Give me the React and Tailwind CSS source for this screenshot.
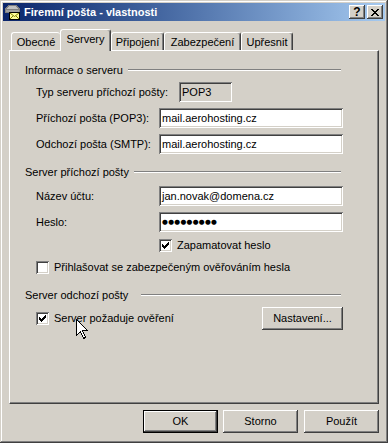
import React from "react";

const raised =
  "shadow-[inset_-1px_-1px_#404040,inset_1px_1px_#ffffff,inset_-2px_-2px_#808080,inset_2px_2px_#d4d0c8]";
const sunken =
  "shadow-[inset_1px_1px_#808080,inset_-1px_-1px_#ffffff,inset_2px_2px_#404040,inset_-2px_-2px_#d4d0c8]";

const CheckMark = () => (
  <svg width="7" height="7" viewBox="0 0 7 7" shapeRendering="crispEdges">
    <path
      d="M6 0h1v3h-1zM5 1h1v3h-1zM4 2h1v3h-1zM0 2h1v3h-1zM1 3h1v3h-1zM2 4h1v3h-1zM3 3h1v3h-1z"
      fill="#000"
    />
  </svg>
);

const Checkbox = ({ checked }) => (
  <div className={`flex h-[13px] w-[13px] shrink-0 items-center justify-center bg-white ${sunken}`}>
    {checked && <CheckMark />}
  </div>
);

const Field = ({ value, width = "w-[184px]", gray = false }) => (
  <div
    className={`flex h-[20px] shrink-0 items-center pl-[3px] ${width} ${gray ? "bg-[#d4d0c8]" : "bg-white"} ${sunken}`}
  >
    {value}
  </div>
);

const Group = ({ label, gap, className = "" }) => (
  <div className={`ml-[15px] flex h-[14px] w-[316px] items-center ${className}`}>
    <span className="shrink-0">{label}</span>
    <div className="h-[2px] flex-1 border-t border-t-[#808080] border-b border-b-white" style={{ marginLeft: gap }} />
  </div>
);

const Button = ({ children, isDefault, className = "" }) => (
  <div
    className={`flex h-[23px] shrink-0 items-center justify-center bg-[#d4d0c8] ${className} ${
      isDefault
        ? "border border-black shadow-[inset_-1px_-1px_#404040,inset_1px_1px_#ffffff,inset_-2px_-2px_#808080]"
        : raised
    }`}
  >
    {children}
  </div>
);

const Tab = ({ label, width, selected, noRight }) => (
  <div
    className={`relative flex shrink-0 items-center justify-center rounded-t-[3px] border-l border-t border-white bg-[#d4d0c8] ${width} ${
      selected ? "z-10 -mb-[1px] h-[22px] pb-[3px]" : "h-[18px] pt-[1px]"
    } ${noRight ? "" : "border-r border-r-[#404040] shadow-[inset_-1px_0_#808080]"}`}
  >
    {label}
  </div>
);

const TitleIcon = () => (
  <svg width="16" height="16" viewBox="0 0 16 16" shapeRendering="crispEdges">
    <path d="M3 1h9l3 4v4H0V5z" fill="#808080" />
    <path d="M4 2h7l2 3H2z" fill="#c0c0c0" />
    <path d="M1 6h13v2H1z" fill="#a0a0a0" />
    <rect x="4" y="8" width="11" height="8" fill="#000" />
    <rect x="5" y="9" width="9" height="6" fill="#ffff99" />
    <path d="M5 9l4.5 3.5L14 9" stroke="#808000" strokeWidth="1" fill="none" shapeRendering="auto" />
    <path d="M5 15l3-3M14 15l-3-3" stroke="#808000" strokeWidth="1" fill="none" shapeRendering="auto" />
  </svg>
);

const Cursor = () => (
  <svg width="12" height="20" viewBox="0 0 12 20" shapeRendering="crispEdges">
    <path d="M0.5 0.5V16.5L4.5 12.5L7.5 19.5L9.5 18.5L6.5 11.5H11.5Z" fill="#fff" stroke="#000" strokeWidth="1" />
  </svg>
);

export default function App() {
  return (
    <div className="relative h-[443px] w-[388px] bg-[#d4d0c8] font-['Liberation_Sans',Arial,sans-serif] text-[11px] leading-[13px] text-black">
      <div className="flex h-full w-full flex-col p-[3px] shadow-[inset_-1px_-1px_#404040,inset_1px_1px_#d4d0c8,inset_-2px_-2px_#808080,inset_2px_2px_#ffffff]">
        {/* caption */}
        <div className="flex h-[18px] shrink-0 items-center bg-gradient-to-r from-[#0a246a] to-[#a6caf0] pl-[2px] pr-[2px]">
          <TitleIcon />
          <span className="ml-[3px] font-bold text-white">Firemní pošta - vlastnosti</span>
          <div className={`ml-auto flex h-[14px] w-[16px] items-center justify-center bg-[#d4d0c8] ${raised}`}>
            <span className="font-bold text-[12px] leading-[12px]">?</span>
          </div>
          <div className={`ml-[2px] flex h-[14px] w-[16px] items-center justify-center bg-[#d4d0c8] ${raised}`}>
            <svg width="8" height="7" viewBox="0 0 8 7" shapeRendering="crispEdges">
              <path
                d="M0 0h2v1h-2zM6 0h2v1h-2zM1 1h2v1h-2zM5 1h2v1h-2zM2 2h4v1h-4zM3 3h2v1h-2zM2 4h4v1h-4zM1 5h2v1h-2zM5 5h2v1h-2zM0 6h2v1h-2zM6 6h2v1h-2z"
                fill="#000"
              />
            </svg>
          </div>
        </div>

        {/* tabs */}
        <div className="mt-[8px] flex h-[21px] shrink-0 items-end pl-[8px]">
          <Tab label="Obecné" width="w-[49px]" noRight />
          <Tab label="Servery" width="w-[51px]" selected />
          <Tab label="Připojení" width="w-[53px]" />
          <Tab label="Zabezpečení" width="w-[77px]" />
          <Tab label="Upřesnit" width="w-[52px]" />
        </div>

        {/* panel */}
        <div className="ml-[6px] h-[354px] w-[370px] shrink-0 border-l border-t border-white border-r border-r-[#404040] border-b border-b-[#404040] shadow-[inset_-1px_-1px_#808080]">
          <div className="flex flex-col pt-[12px]">
            <Group label="Informace o serveru" gap={5} />
            <div className="mt-[5px] flex h-[20px] items-center pl-[26px]">
              <span className="w-[143px] shrink-0">Typ serveru příchozí pošty:</span>
              <Field value="POP3" width="w-[53px]" gray />
            </div>
            <div className="mt-[6px] flex h-[20px] items-center pl-[26px]">
              <span className="w-[123px] shrink-0">Příchozí pošta (POP3):</span>
              <Field value="mail.aerohosting.cz" />
            </div>
            <div className="mt-[6px] flex h-[20px] items-center pl-[26px]">
              <span className="w-[123px] shrink-0">Odchozí pošta (SMTP):</span>
              <Field value="mail.aerohosting.cz" />
            </div>

            <Group label="Server příchozí pošty" gap={5} className="mt-[11px]" />
            <div className="mt-[7px] flex h-[20px] items-center pl-[26px]">
              <span className="w-[123px] shrink-0">Název účtu:</span>
              <Field value="jan.novak@domena.cz" />
            </div>
            <div className="mt-[6px] flex h-[20px] items-center pl-[26px]">
              <span className="w-[123px] shrink-0">Heslo:</span>
              <Field
                value={
                  <span className="font-['DejaVu_Sans',sans-serif] text-[6.7px] tracking-[0.3px]">●●●●●●●●●</span>
                }
              />
            </div>
            <div className="mt-[7px] flex h-[13px] items-center pl-[149px]">
              <Checkbox checked />
              <span className="ml-[5px]">Zapamatovat heslo</span>
            </div>
            <div className="mt-[9px] flex h-[13px] items-center pl-[26px]">
              <Checkbox />
              <span className="ml-[5px]">Přihlašovat se zabezpečeným ověřováním hesla</span>
            </div>

            <Group label="Server odchozí pošty" gap={13} className="mt-[14px]" />
            <div className="mt-[5px] flex h-[23px] w-[333px] items-center pl-[26px]">
              <Checkbox checked />
              <span className="ml-[5px]">Server požaduje ověření</span>
              <Button className="ml-auto w-[81px]">Nastavení...</Button>
            </div>
          </div>
        </div>

        {/* dialog buttons */}
        <div className="mt-[6px] flex w-[376px] justify-end">
          <Button isDefault className="w-[75px]">
            OK
          </Button>
          <Button className="ml-[5px] w-[75px]">Storno</Button>
          <Button className="ml-[6px] w-[75px]">Použít</Button>
        </div>
      </div>

      <div className="absolute left-[76px] top-[319px]">
        <Cursor />
      </div>
    </div>
  );
}
